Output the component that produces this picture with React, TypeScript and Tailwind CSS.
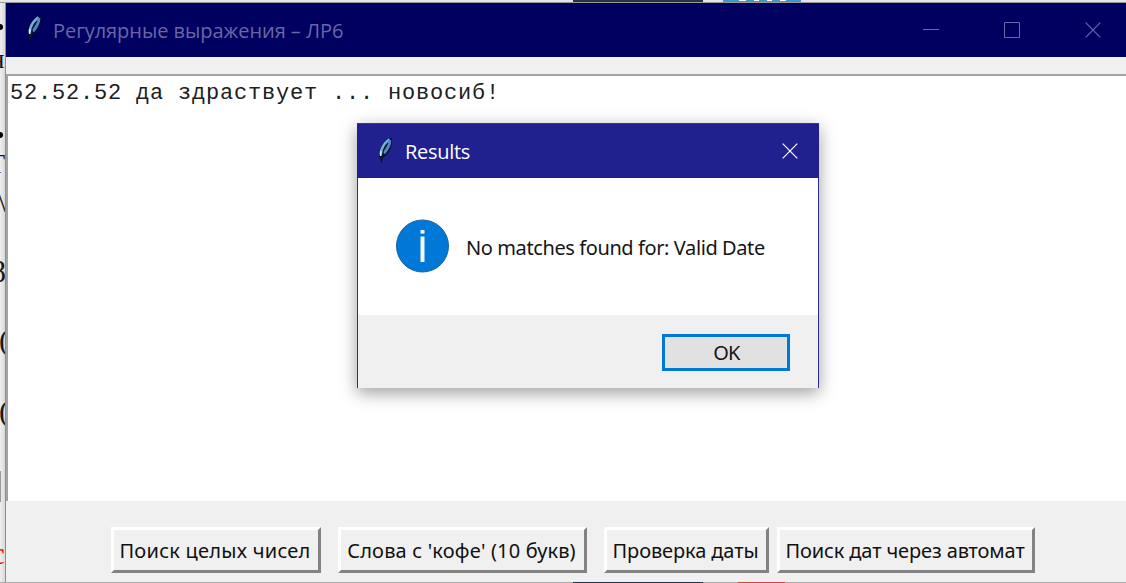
import React from "react";

function Feather({ className }: { className: string }) {
  return (
    <svg viewBox="0 0 16 28" className={className} fill="none">
      <path d="M14.6 0.8C9.5 1.4 5.2 6 3 12C1.8 15.5 1.9 18.5 3 21L4.2 27L6 20.5C10 18 13.4 13.5 14.6 8C15.1 5.4 15.2 2.8 14.6 0.8Z" fill="#0a1020" />
      <path d="M12.6 2.4C9 4.6 6 8.6 4.4 13L3.7 17.6" stroke="#74aee0" strokeWidth="2.6" />
      <path d="M12.8 3C12.9 7.6 10.4 12.2 6.8 16.2" stroke="#4f86c8" strokeWidth="3" />
      <path d="M11 6.2L6.6 13.4L4.6 22" stroke="#16233c" strokeWidth="0.9" />
      <path d="M3.7 14V19" stroke="#d5f0f7" strokeWidth="1.6" />
    </svg>
  );
}

function CloseIcon({ className }: { className: string }) {
  return (
    <svg viewBox="0 0 16 16" className={className} stroke="currentColor" strokeWidth="1.2">
      <path d="M0.7 0.7L15.3 15.3M15.3 0.7L0.7 15.3" />
    </svg>
  );
}

const buttonBase =
  "flex h-[46px] shrink-0 items-center justify-center whitespace-pre border-[3px] border-t-white border-l-white border-r-[#828282] border-b-[#828282] bg-[#f0f0f0] pr-[2px] pt-px text-[20px] leading-none text-[#111]";

function Backdrop() {
  return (
    <div className="relative w-[6px] shrink-0 overflow-hidden border-r border-[#8f8f8f] bg-gradient-to-r from-[#efeff0] to-[#d9d9d9] font-['Liberation_Serif',serif] text-[30px] leading-none text-[#181818]">
      <div className="absolute -left-[3px] top-[21px] size-[6px] rounded-full bg-black" />
      <span className="absolute -left-[10px] top-[43px] text-[27px]">н</span>
      <div className="absolute -left-[3px] top-[129px] size-[6px] rounded-full bg-black" />
      <span className="absolute right-0 top-[147px] text-[28px]">Т</span>
      <span className="absolute -right-px top-[184px]">\</span>
      <span className="absolute -right-px top-[253px] text-[31px]">8</span>
      <span className="absolute -left-px top-[322px]">(</span>
      <span className="absolute -left-px top-[393px]">(</span>
      <div className="absolute left-0 top-[468px] h-[31px] w-px bg-[#9a9a9a]" />
      <span className="absolute right-0 top-[534px] text-[32px] text-[#f00]">с</span>
    </div>
  );
}

function MessageDialog() {
  return (
    <section className="absolute left-[357px] top-[123px] flex h-[265px] w-[462px] flex-col border-x border-[#2d2c9b] bg-white shadow-[0_5px_16px_rgba(0,0,0,0.38)]">
      <header className="-mx-px flex h-[55px] shrink-0 items-center border-t border-[#3b3b78] bg-[#20208f] pl-[20px] pr-[21px] text-white">
        <Feather className="h-[28px] w-[16px]" />
        <h2 className="ml-[12px] whitespace-pre pt-[2px] font-['Open_Sans',sans-serif] text-[20px] leading-none tracking-[-0.3px]">Results</h2>
        <CloseIcon className="mb-px ml-auto size-[16px]" />
      </header>
      <div className="flex h-[137px] shrink-0 items-center pl-[38px]">
        <svg viewBox="0 0 54 54" className="mb-[2px] size-[54px] shrink-0">
          <circle cx="26.5" cy="27" r="26" fill="#0078d7" stroke="#1764a4" strokeWidth="1" />
          <rect x="24.5" y="17.5" width="4" height="25.5" fill="#f1f8fe" />
          <rect x="24.5" y="11" width="4" height="3.6" fill="#f1f8fe" />
        </svg>
        <p className="ml-[16px] whitespace-pre pt-[3px] font-['Noto_Sans',sans-serif] text-[20px] leading-none tracking-[-0.4px] text-[#151515]">No matches found for: Valid Date</p>
      </div>
      <footer className="flex flex-1 items-center justify-end bg-[#f0f0f0] pr-[28px]">
        <button className="mt-px flex h-[37px] w-[128px] items-center justify-center border-[3px] border-[#0078d7] bg-[#e1e1e1] pl-px pt-px font-['Noto_Sans',sans-serif] text-[20px] leading-none tracking-[-0.7px] text-[#151515]">OK</button>
      </footer>
    </section>
  );
}

export default function App() {
  return (
    <main className="relative flex h-[583px] w-[1126px] flex-col overflow-hidden bg-[#e8e8ea] font-['Noto_Sans',sans-serif]">
      <div className="flex h-[3px] shrink-0 border-b border-[#999] bg-[#e4e4ea]">
        <div className="ml-[573px] w-[130px] bg-[#253447]" />
        <div className="ml-[20px] flex w-[78px] justify-center gap-[8px] bg-[#3b98ca]">
          <i className="h-px w-[7px] bg-white" />
          <i className="h-px w-[5px] bg-white" />
          <i className="h-px w-[5px] bg-white" />
          <i className="h-px w-[6px] bg-white" />
        </div>
      </div>
      <div className="flex h-[579px] shrink-0">
        <Backdrop />
        <div className="flex flex-1 flex-col bg-[#f0f0f0]">
          <header className="flex h-[54px] shrink-0 items-center bg-[#000060] pl-[20px] text-[#6767a5]">
            <Feather className="-mt-[2px] h-[28px] w-[16px]" />
            <h1 className="ml-[11px] whitespace-pre pt-[2px] font-['Open_Sans',sans-serif] text-[20px] leading-none tracking-[-0.05px]">Регулярные выражения – ЛР6</h1>
            <svg viewBox="0 0 16 16" className="ml-auto size-[16px]" stroke="currentColor"><path d="M0 7.5H16" /></svg>
            <svg viewBox="0 0 16 16" className="ml-[65px] size-[16px]" stroke="currentColor" fill="none"><path d="M0.5 0.5H15.5V15.5H0.5Z" /></svg>
            <CloseIcon className="ml-[65px] mr-[25px] size-[16px]" />
          </header>
          <div className="mt-[17px] h-[427px] shrink-0 border-l-2 border-t-2 border-[#a3a3a3] bg-white">
            <p className="whitespace-pre pl-[2px] pt-[7px] font-['Liberation_Mono',monospace] text-[22px] leading-[22px] tracking-[0.8px] text-[#202020]">52.52.52 да здраствует ... новосиб!</p>
          </div>
          <div className="flex pl-[105px] pt-[26px]">
            <button className={buttonBase + " w-[210px] tracking-[0.25px]"}>Поиск целых чисел</button>
            <button className={buttonBase + " ml-[17px] w-[249px] tracking-[0.17px]"}>Слова с 'кофе' (10 букв)</button>
            <button className={buttonBase + " ml-[17px] w-[165px] tracking-[-0.1px]"}>Проверка даты</button>
            <button className={buttonBase + " ml-[8px] w-[258px] tracking-[-0.12px]"}>Поиск дат через автомат</button>
          </div>
        </div>
      </div>
      <div className="flex h-px shrink-0 bg-[#aaa]">
        <div className="ml-[573px] w-[130px] bg-[#253447]" />
        <div className="ml-[35px] w-[47px] bg-[#cf4338]" />
      </div>
      <MessageDialog />
    </main>
  );
}
